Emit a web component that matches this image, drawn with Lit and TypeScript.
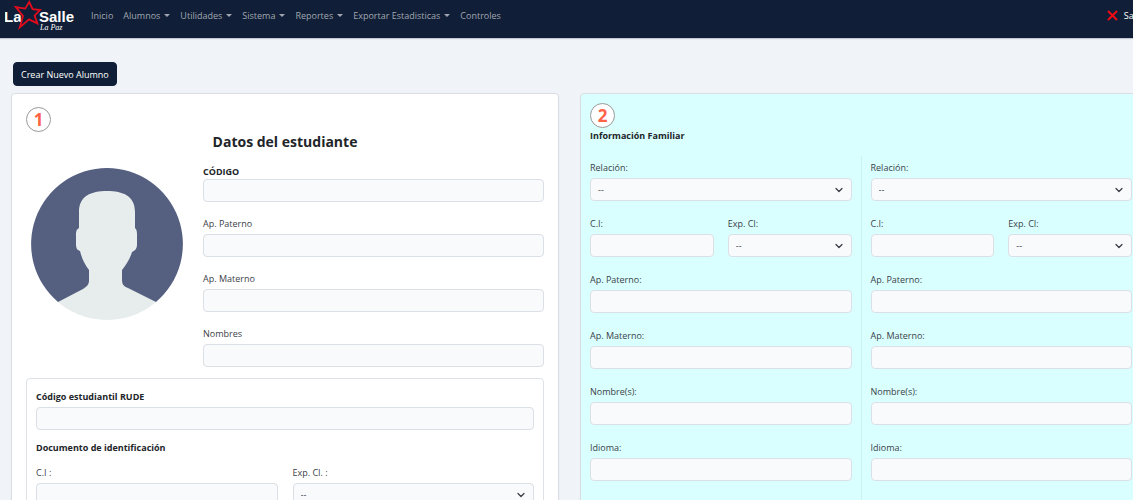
import { LitElement, html, svg, css } from "lit";
import { customElement, property } from "lit/decorators.js";

const fieldStyles = css`
  * {
    box-sizing: border-box;
  }
  label {
    display: block;
    font-size: 9px;
    line-height: 15px;
    color: #3b4147;
  }
  label.strong {
    font-weight: 700;
    color: #212529;
  }
  input,
  select {
    display: block;
    width: 100%;
    height: 23px;
    margin: 0;
    padding: 0 7px;
    border: 1px solid #dae0e6;
    border-radius: 4px;
    background-color: #f8fafc;
    color: #3b4147;
    font: inherit;
    font-size: 9px;
    outline: none;
  }
  select {
    appearance: none;
    background-image: url("data:image/svg+xml,%3Csvg xmlns='http://www.w3.org/2000/svg' viewBox='0 0 16 16'%3E%3Cpath fill='none' stroke='%23343a40' stroke-width='2.4' stroke-linecap='round' stroke-linejoin='round' d='m2 5 6 6 6-6'/%3E%3C/svg%3E");
    background-repeat: no-repeat;
    background-position: right 8px center;
    background-size: 8px 8px;
  }
`;

@customElement("form-field")
class FormField extends LitElement {
  @property() label = "";
  @property() kind = "text";
  @property({ type: Boolean }) strong = false;
  @property({ type: Boolean }) tight = false;

  static styles = [
    fieldStyles,
    css`
      :host {
        display: block;
        min-width: 0;
      }
      .stack {
        display: flex;
        flex-direction: column;
        gap: 3px;
      }
      .stack.tight {
        gap: 0;
      }
    `,
  ];

  render() {
    return html`
      <div class="stack ${this.tight ? "tight" : ""}">
        <label for="control" class=${this.strong ? "strong" : ""}>${this.label}</label>
        ${this.kind === "select"
          ? html`<select id="control"><option>--</option></select>`
          : html`<input id="control" type="text" />`}
      </div>
    `;
  }
}

@customElement("school-navbar")
class SchoolNavbar extends LitElement {
  private items = [
    { text: "Inicio", menu: false },
    { text: "Alumnos", menu: true },
    { text: "Utilidades", menu: true },
    { text: "Sistema", menu: true },
    { text: "Reportes", menu: true },
    { text: "Exportar Estadisticas", menu: true },
    { text: "Controles", menu: false },
  ];

  static styles = css`
    :host {
      display: block;
    }
    nav {
      display: flex;
      align-items: flex-start;
      height: 38px;
      padding-left: 5px;
      background: #101f37;
      box-shadow: 0 1px 1px rgba(16, 31, 55, 0.2);
    }
    .brand {
      display: block;
      margin-right: 11px;
    }
    .brand svg {
      display: block;
    }
    ul {
      display: flex;
      flex: 1;
      margin: 0;
      padding: 8px 0 0;
      list-style: none;
    }
    .link {
      display: flex;
      align-items: center;
      gap: 4px;
      padding: 0 5px;
      border: 0;
      background: none;
      color: #a0a6b0;
      font: inherit;
      font-size: 9px;
      line-height: 15px;
      text-decoration: none;
      white-space: nowrap;
    }
    .caret {
      border: 3px solid transparent;
      border-top-color: currentColor;
      border-bottom: 0;
    }
    .exit {
      display: flex;
      align-items: center;
      gap: 6px;
      padding: 8px 11px 0 0;
      color: #fff;
      font-size: 9px;
      line-height: 15px;
      text-decoration: none;
    }
    .brand text {
      fill: #fff;
    }
    .word {
      font: 700 15px "Liberation Sans", sans-serif;
    }
    .script {
      font: italic 400 8px "Liberation Serif", serif;
    }
  `;

  render() {
    return html`
      <nav>
        <a class="brand" href="#" aria-label="La Salle La Paz">
          <svg width="70" height="34" viewBox="0 0 70 34">
            ${svg`
              <text class="word" x="-1" y="22">La</text>
              <text class="word" x="34" y="22">Salle</text>
              <path fill="none" stroke="#e30b1c" stroke-width="1.8" stroke-linejoin="miter"
                d="M24.2 2 L27.6 9.2 L35 10 L29.6 15.6 L32.4 23.4 L24 19.4 L14.8 27.4 L18 16 L10.8 7 L20.2 8.6 Z" />
              <text class="script" x="35" y="30">La Paz</text>
            `}
          </svg>
        </a>
        <ul>
          ${this.items.map(
            (item) => html`<li>
              ${item.menu
                ? html`<button class="link" type="button">${item.text}<span class="caret"></span></button>`
                : html`<a class="link" href="#">${item.text}</a>`}
            </li>`
          )}
        </ul>
        <a class="exit" href="#">
          <svg width="11" height="11" viewBox="0 0 11 11">
            <path d="M1 1 L10 10 M10 1 L1 10" stroke="#f00a14" stroke-width="2" fill="none" />
          </svg>
          Salir
        </a>
      </nav>
    `;
  }
}

@customElement("family-member")
class FamilyMember extends LitElement {
  static styles = css`
    :host {
      display: flex;
      flex-direction: column;
      gap: 15px;
      min-width: 0;
      padding-top: 4px;
    }
    .pair {
      display: grid;
      grid-template-columns: 1fr 1fr;
      gap: 14px;
    }
  `;

  render() {
    return html`
      <form-field label="Relación:" kind="select"></form-field>
      <div class="pair">
        <form-field label="C.I:"></form-field>
        <form-field label="Exp. CI:" kind="select"></form-field>
      </div>
      ${["Ap. Paterno:", "Ap. Materno:", "Nombre(s):", "Idioma:", "Ocupación:"].map(
        (label) => html`<form-field label=${label}></form-field>`
      )}
    `;
  }
}

@customElement("app-root")
class AppRoot extends LitElement {
  static styles = css`
    * {
      box-sizing: border-box;
    }
    :host {
      display: block;
      height: 100vh;
      overflow: hidden;
      background: #f0f4f9;
      color: #212529;
      font-family: "Open Sans", "Noto Sans", sans-serif;
      font-size: 9px;
      line-height: 15px;
    }
    .page {
      width: calc(100% + 20px);
    }
    main {
      padding: 24px 11px 0;
    }
    .create {
      display: block;
      height: 24px;
      margin: 0 0 7px 2px;
      padding: 0 7px;
      border: 1px solid #101f37;
      border-radius: 4px;
      background: #101f37;
      color: #fff;
      font: inherit;
    }
    .cards {
      display: grid;
      grid-template-columns: 548fr 562fr;
      gap: 21px;
    }
    .card {
      min-width: 0;
      border: 1px solid #dadee3;
      border-radius: 4px;
      box-shadow: 0 1px 2px rgba(0, 0, 0, 0.06);
    }
    .student {
      padding: 13px 14px;
      background: #fff;
    }
    .family {
      padding: 9px;
      background: #d9ffff;
    }
    .step {
      display: flex;
      align-items: center;
      justify-content: center;
      width: 25px;
      height: 25px;
      border: 1px solid #999;
      border-radius: 50%;
      background: #fff;
      color: #ff6347;
      font-size: 17px;
      font-weight: 700;
    }
    h1,
    h2,
    h3 {
      margin: 0;
      font-size: 9px;
      line-height: 15px;
      font-weight: 700;
    }
    h1 {
      font-size: 14px;
      line-height: 20px;
      text-align: center;
    }
    .profile {
      display: grid;
      grid-template-columns: 162px 1fr;
      gap: 15px;
      margin-top: 12px;
    }
    .avatar {
      display: block;
      width: 152px;
      margin: 4px 0 0 5px;
    }
    .names {
      display: flex;
      flex-direction: column;
      gap: 14px;
    }
    .box {
      display: flex;
      flex-direction: column;
      gap: 10px;
      margin-top: 11px;
      padding: 10px 9px;
      border: 1px solid #dee2e6;
      border-radius: 4px;
    }
    .pair {
      display: grid;
      grid-template-columns: 1fr 1fr;
      gap: 15px;
    }
    .members {
      display: grid;
      grid-template-columns: 1fr 1px 1fr;
      gap: 9px;
      margin-top: 13px;
    }
    .rule {
      background: #cfeef3;
    }
  `;

  render() {
    return html`
      <div class="page">
        <school-navbar></school-navbar>
        <main>
          <button class="create" type="button">Crear Nuevo Alumno</button>
          <div class="cards">
            <section class="card student">
              <div class="step">1</div>
              <h1>Datos del estudiante</h1>
              <div class="profile">
                <svg class="avatar" viewBox="0 0 152 152" role="img" aria-label="Foto del estudiante">
                  <defs><clipPath id="disc"><circle cx="76" cy="76" r="76" /></clipPath></defs>
                  <path fill="#556080" d="M76 0 A76 76 0 0 1 125 134 H27 A76 76 0 0 1 76 0 Z" />
                  <path
                    clip-path="url(#disc)"
                    fill="#e7eced"
                    d="M76 23 C60 23 48 28 48 44 V60 C45 62 45 64 45 68 V76 C45 80 46 82 49 83 C51 91 54 97 58 102 V112 C58 117 56 118 52 121 L27 134 V152 H125 V134 L97 120 C92 118 91 116 91 111 V102 C95 97 99 91 101 84 C105 82 106 80 106 76 V68 C106 64 106 62 104 60 V44 C104 28 92 23 76 23 Z"
                  />
                </svg>
                <div class="names">
                  <form-field label="CÓDIGO" strong tight></form-field>
                  <form-field label="Ap. Paterno"></form-field>
                  <form-field label="Ap. Materno"></form-field>
                  <form-field label="Nombres"></form-field>
                </div>
              </div>
              <div class="box">
                <form-field label="Código estudiantil RUDE" strong></form-field>
                <h3>Documento de identificación</h3>
                <div class="pair">
                  <form-field label="C.I :"></form-field>
                  <form-field label="Exp. CI. :" kind="select"></form-field>
                </div>
              </div>
            </section>
            <section class="card family">
              <div class="step">2</div>
              <h2>Información Familiar</h2>
              <div class="members">
                <family-member></family-member>
                <div class="rule"></div>
                <family-member></family-member>
              </div>
            </section>
          </div>
        </main>
      </div>
    `;
  }
}
